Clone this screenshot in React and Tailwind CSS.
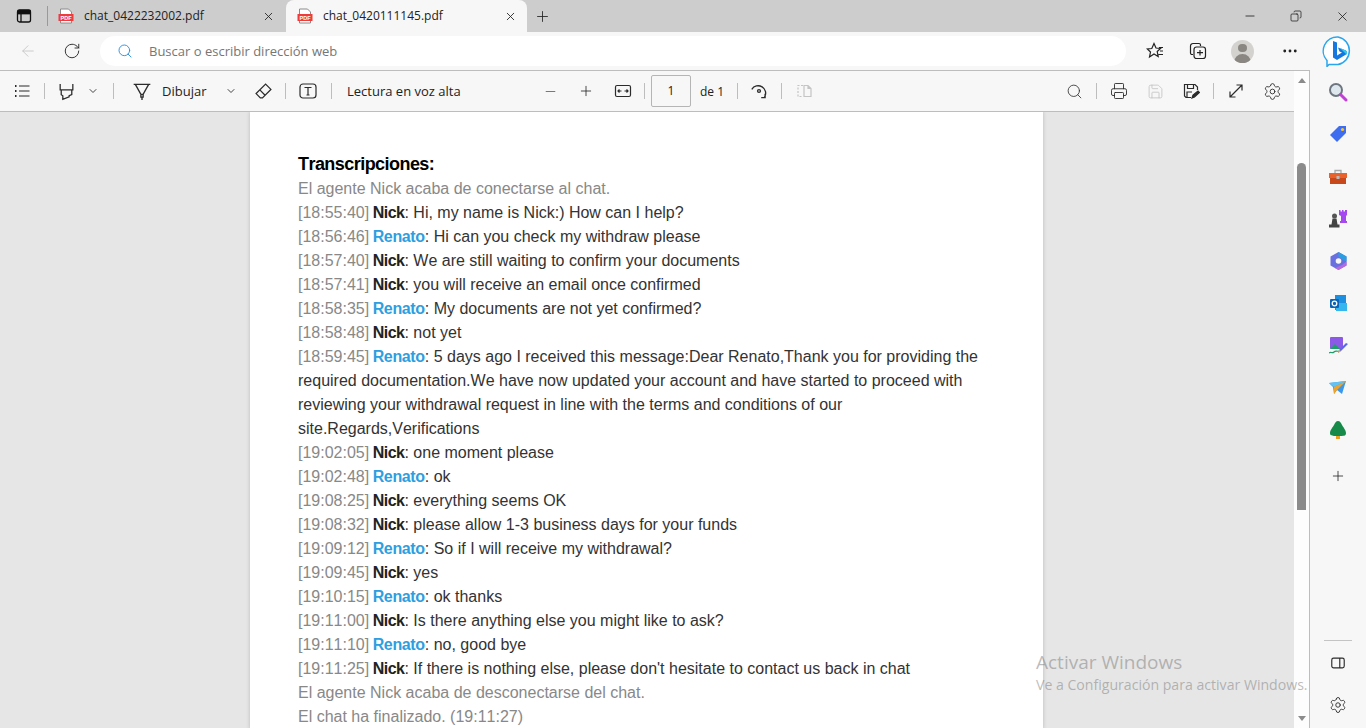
import { Plus, X, Minus, RotateCw, ArrowLeft, Search, Copy, MoreHorizontal, Printer, Save, Settings, ChevronDown } from 'lucide-react'

const LINES = [
  ['18:55:40', 'Nick', 'Hi, my name is Nick:) How can I help?'],
  ['18:56:46', 'Renato', 'Hi can you check my withdraw please'],
  ['18:57:40', 'Nick', 'We are still waiting to confirm your documents'],
  ['18:57:41', 'Nick', 'you will receive an email once confirmed'],
  ['18:58:35', 'Renato', 'My documents are not yet confirmed?'],
  ['18:58:48', 'Nick', 'not yet'],
  ['18:59:45', 'Renato', '5 days ago I received this message:Dear Renato,Thank you for providing the required documentation.We have now updated your account and have started to proceed with reviewing your withdrawal request in line with the terms and conditions of our site.Regards,Verifications'],
  ['19:02:05', 'Nick', 'one moment please'],
  ['19:02:48', 'Renato', 'ok'],
  ['19:08:25', 'Nick', 'everything seems OK'],
  ['19:08:32', 'Nick', 'please allow 1-3 business days for your funds'],
  ['19:09:12', 'Renato', 'So if I will receive my withdrawal?'],
  ['19:09:45', 'Nick', 'yes'],
  ['19:10:15', 'Renato', 'ok thanks'],
  ['19:11:00', 'Nick', 'Is there anything else you might like to ask?'],
  ['19:11:10', 'Renato', 'no, good bye'],
  ['19:11:25', 'Nick', "If there is nothing else, please don't hesitate to contact us back in chat"],
]

function PdfIcon() {
  return (
    <svg width="16" height="16" viewBox="0 0 16 16">
      <path d="M2.5 1h8l3 3v11h-11z" fill="#fff" stroke="#8a8a8a" />
      <rect x="0.5" y="6" width="15" height="7" fill="#ee3b3b" />
      <text x="8" y="11.5" textAnchor="middle" fontSize="5.5" fontWeight="700" fill="#fff" fontFamily="Liberation Sans, sans-serif">PDF</text>
    </svg>
  )
}

function Tab({ name, active }) {
  return (
    <div className={`h-8 flex items-center shrink-0 ${active ? 'w-[241px] bg-[#f7f7f7] rounded-t-lg pl-[11px]' : 'w-[238px] pl-[10px]'}`}>
      <PdfIcon />
      <span className={`text-[12px] text-[#222] ml-[10px] ${active ? 'w-[181px]' : 'w-[178px]'}`}>{name}</span>
      <X className="w-[13px] h-[13px] text-[#222]" strokeWidth={1.6} />
    </div>
  )
}

function Cell({ w = 'w-9', children, className = '' }) {
  return <div className={`${w} h-full flex items-center justify-center shrink-0 ${className}`}>{children}</div>
}

function Sep({ className = '' }) {
  return <div className={`w-px h-[16px] bg-[#bdbdbd] shrink-0 ${className}`} />
}

const Stroke = ({ children, size = 18, color = '#2b2b2b', sw = 1.2 }) => (
  <svg width={size} height={size} viewBox="0 0 18 18" fill="none" stroke={color} strokeWidth={sw}>{children}</svg>
)

function PdfToolbar() {
  return (
    <div className="h-[41px] flex items-center bg-[#f7f7f7] border-b border-[#bdbdbd] text-[#222] text-[13px]">
      <Cell className="ml-[4px]"><Stroke><path d="M2 4h1.500M2 9h1.500M2 14h1.500" strokeWidth="2" /><path d="M6 4h10.500M6 9h10.500M6 14h10.500" /></Stroke></Cell>
      <Sep className="ml-[4px]" />
      <Cell className="ml-[3px]"><Stroke size={19}><path d="M3 2v5.500h12V2M4 7.500V12l1.500 1v3.500l6-2.500v-1l2.500-1V7.500" /></Stroke></Cell>
      <Cell w="w-[18px]"><ChevronDown className="w-[12px] h-[12px] text-[#444]" /></Cell>
      <Sep className="ml-[11px]" />
      <Cell className="ml-[10px]"><Stroke size={20}><path d="M1.500 3h15M3 3l5 9h2l5-9M8 12v2.500h2V12M9 14.500V17" /></Stroke></Cell>
      <span className="ml-[2px] pt-px w-[45px] whitespace-nowrap">Dibujar</span>
      <Cell w="w-[18px]" className="ml-[15px]"><ChevronDown className="w-[12px] h-[12px] text-[#444]" /></Cell>
      <Cell className="ml-[5px]"><Stroke size={19}><path d="M11 2l5 5-8 8H6l-4-4zM5.500 7.500l5 5" /></Stroke></Cell>
      <Sep className="ml-[4px]" />
      <Cell className="ml-[4px]"><Stroke><rect x="1" y="2" width="16" height="14" rx="3" /><path d="M5.500 5.500h7M9 5.500v7.500M7.500 13h3" /></Stroke></Cell>
      <Sep className="ml-[5px]" />
      <span className="ml-[15px] pt-px w-[115px] whitespace-nowrap">Lectura en voz alta</span>
      <Cell className="ml-[70px]"><Minus className="w-[15px] h-[15px] text-[#666]" strokeWidth={1.4} /></Cell>
      <Cell><Plus className="w-[16px] h-[16px] text-[#222]" strokeWidth={1.2} /></Cell>
      <Cell className="ml-px"><Stroke><rect x="1.500" y="3.500" width="15" height="11" rx="1.500" /><path d="M4 9h3.500M10.500 9H14M5.500 7.500L4 9l1.500 1.500M12.500 7.500L14 9l-1.500 1.500" /></Stroke></Cell>
      <Sep className="ml-[3px]" />
      <div className="ml-[6px] w-10 h-[32px] border border-[#b5b5b5] rounded-[2px] flex items-center justify-center text-[12px] shrink-0">1</div>
      <span className="ml-[9px] pt-px w-[24px] text-[12px] whitespace-nowrap">de 1</span>
      <Sep className="ml-[13px]" />
      <Cell className="ml-[3px]"><Stroke size={20}><path d="M2.500 7.500a6.500 6.500 0 1 1 11.500 7M14.500 11.500v3.500h-3.500" /><circle cx="9" cy="9" r="1.300" /></Stroke></Cell>
      <Sep className="ml-[4px]" />
      <Cell className="ml-[4px]"><Stroke color="#c4c4c4"><path d="M8 3.500H3v11h5" strokeDasharray="2 1.500" /><path d="M9 3.500h4l3 3v8H9zM13 3.500v3h3" /></Stroke></Cell>
      <div className="flex-1" />
      <Cell><Search className="w-[17px] h-[17px] text-[#333]" strokeWidth={1.2} /></Cell>
      <Sep className="ml-[4px]" />
      <Cell className="ml-[4px]"><Printer className="w-[18px] h-[18px] text-[#2b2b2b]" strokeWidth={1.2} /></Cell>
      <Cell><Save className="w-[17px] h-[17px] text-[#c4c4c4]" strokeWidth={1.2} /></Cell>
      <Cell><Stroke><path d="M9 15.500H4L2.500 14V2.500H13L15.500 5v3M5.500 2.500v4h6v-4M5 15v-5h5" /><path d="M10 16l1-3 5-4 1.500 1.500-5 4.500z" fill="#2b2b2b" /></Stroke></Cell>
      <Sep className="ml-[4px]" />
      <Cell className="ml-[4px]"><Stroke><path d="M3 15L15 3M9.500 3H15v5.500M3 9.500V15h5.500" /></Stroke></Cell>
      <Cell><Settings className="w-[19px] h-[19px] text-[#2b2b2b]" strokeWidth={1.1} /></Cell>
      <div className="w-[4px]" />
    </div>
  )
}

function PdfPage() {
  return (
    <div className="w-[793px] ml-[250px] bg-white pt-10 px-12 shadow-[0_0_4px_rgba(0,0,0,0.2)] font-['Liberation_Sans',sans-serif] [font-kerning:none] text-[16px] leading-6 text-[#333]">
      <div className="h-[25px] text-[18px] font-bold text-black tracking-[-0.55px]">Transcripciones:</div>
      <div className="text-[#888]">El agente Nick acaba de conectarse al chat.</div>
      {LINES.map(([time, who, msg], i) => (
        <div key={i}>
          <span className="text-[#888]">[{time}]</span>{' '}
          <b className={`-ml-px ${who === 'Renato' ? 'tracking-[-0.35px] text-[#2d9fe0]' : 'tracking-[-0.5px] text-[#222]'}`}>{who}</b>: {msg}
        </div>
      ))}
      <div className="text-[#888]">El agente Nick acaba de desconectarse del chat.</div>
      <div className="text-[#888]">El chat ha finalizado. (19:11:27)</div>
    </div>
  )
}

function Scrollbar() {
  return (
    <div className="w-[15px] bg-[#fdfdfd] flex flex-col items-center shrink-0">
      <div className="mt-[7px] w-0 h-0 border-x-[4px] border-x-transparent border-b-[5px] border-b-[#8b8b8b]" />
      <div className="mt-[80px] w-[9px] h-[347px] bg-[#8b8b8b] rounded-t-full rounded-b-[4px]" />
      <div className="flex-1" />
      <div className="mb-[7px] w-0 h-0 border-x-[4px] border-x-transparent border-t-[5px] border-t-[#8b8b8b]" />
    </div>
  )
}

function SideIcon({ children }) {
  return <div className="h-[42.25px] flex items-center justify-center">{children}</div>
}

function Sidebar() {
  return (
    <div className="w-[57px] bg-[#f7f7f7] flex flex-col items-center shrink-0 relative">
      <div className="h-[38px] w-full pl-px flex items-center justify-center">
        <svg width="32" height="32" viewBox="0 0 32 32">
          <path d="M16 2a14 14 0 0 1 0 27.500H7l-2 2v-6A14 14 0 0 1 16 2z" fill="#fff" stroke="#2aa6ee" strokeWidth="1.500" />
          <path d="M11 6l4 1.500v13l5-3-2.500-1-1.500-4 8 3v4l-9 5.500-4-2.500z" fill="#1478e0" />
          <path d="M18 13l7 3v4l-3-3z" fill="#35c7e8" />
        </svg>
      </div>
      <div className="w-full flex-1 border-l border-[#bdbdbd] flex flex-col items-center pt-[1px]">
        <SideIcon>
          <svg width="20" height="20" viewBox="0 0 20 20">
            <circle cx="8" cy="8" r="6" fill="#dfe7ee" stroke="#6d7680" strokeWidth="2" />
            <path d="M12.500 12.500L18 18" stroke="#c13fd8" strokeWidth="3" strokeLinecap="round" />
          </svg>
        </SideIcon>
        <SideIcon>
          <svg width="18" height="18" viewBox="0 0 18 18">
            <path d="M10 1h7v7l-9 9-7-7z" fill="#3f6df0" />
            <circle cx="13.500" cy="4.500" r="1.600" fill="#f4c531" />
          </svg>
        </SideIcon>
        <SideIcon>
          <svg width="18" height="16" viewBox="0 0 18 16">
            <path d="M6 4V1.500h6V4" fill="none" stroke="#a9a9a9" strokeWidth="1.300" />
            <rect x="0" y="4" width="18" height="5" fill="#e9622b" />
            <rect x="1" y="9" width="16" height="6" fill="#c8481c" />
            <rect x="7.500" y="7" width="3" height="3" fill="#bbb" />
          </svg>
        </SideIcon>
        <SideIcon>
          <svg width="18" height="20" viewBox="0 0 18 20">
            <path d="M10 1h1.500v1.500H13V1h1.500v1.500H16V1h2v5l-1 1v5h1v2h-7v-2h1V7l-2-1z" fill="#a548f0" />
            <circle cx="5.500" cy="7" r="2.500" fill="#555" />
            <path d="M3.500 9.500h4l1 6h2v3H0v-3h2.500z" fill="#444" />
          </svg>
        </SideIcon>
        <SideIcon>
          <svg width="17" height="18" viewBox="0 0 17 18">
            <path d="M8.500 0l8 4.500v9L8.500 18l-8-4.500v-9z" fill="#6a6fe0" />
            <path d="M8.500 0l8 4.500v5l-4-2-4-3z" fill="#2a9fe0" />
            <path d="M16.500 9.500v4L8.500 18 5 16l7-3z" fill="#b56ae0" />
            <circle cx="8.500" cy="9" r="2.800" fill="#f7f7f7" />
          </svg>
        </SideIcon>
        <SideIcon>
          <svg width="17" height="16" viewBox="0 0 17 16">
            <rect x="5" y="0" width="11" height="15" fill="#1c8fe0" />
            <path d="M6 8h11v8H6z" fill="#36b6ee" />
            <rect x="0" y="4" width="9" height="9" rx="1" fill="#0d62b5" />
            <circle cx="4.500" cy="8.500" r="2.300" fill="none" stroke="#fff" strokeWidth="1.300" />
          </svg>
        </SideIcon>
        <SideIcon>
          <svg width="19" height="18" viewBox="0 0 19 18">
            <rect x="1" y="0" width="13" height="12" rx="1" fill="#8b58e8" />
            <path d="M1 12l5-5 5 5z" fill="#1f9d6b" />
            <path d="M0 16c2-2 3 1 5-1s3 0 5-1" fill="none" stroke="#1f9d6b" strokeWidth="1.200" />
            <path d="M9 16l1-3 7-7 2 1-7 7z" fill="#5a67e8" />
            <path d="M9 16l1-3 2 1z" fill="#f2b632" />
          </svg>
        </SideIcon>
        <SideIcon>
          <svg width="18" height="14" viewBox="0 0 18 14">
            <path d="M0 2l17-2-4 13-5-4-3 4-1-7z" fill="#3a98ec" />
            <path d="M0 2l17-2-12 6z" fill="#62c3f2" />
            <path d="M5 6l12-6-9 9-3 4z" fill="#f0a328" />
          </svg>
        </SideIcon>
        <SideIcon>
          <svg width="16" height="18" viewBox="0 0 16 18">
            <rect x="6" y="13" width="4" height="5" fill="#e9a11f" />
            <path d="M8 0c2 0 3 2 4 4s4 5 4 8-2 3-8 3-8 0-8-3 3-6 4-8 2-4 4-4z" fill="#178a4a" />
          </svg>
        </SideIcon>
        <div className="h-[50px] flex items-center justify-center">
          <Plus className="w-[16px] h-[16px] text-[#222]" strokeWidth={1.2} />
        </div>
        <div className="flex-1" />
        <div className="w-[28px] h-px bg-[#c4c4c4]" />
        <div className="h-[44px] flex items-center justify-center">
          <Stroke size={16} sw={1.300}><rect x="2" y="3.500" width="14" height="11" rx="2" /><path d="M11 3.500v11" /></Stroke>
        </div>
        <div className="h-[40px] mb-[3px] flex items-center justify-center">
          <Settings className="w-[18px] h-[18px] text-[#2b2b2b]" strokeWidth={1.2} />
        </div>
      </div>
    </div>
  )
}

export default function App() {
  return (
    <div className="w-[1366px] h-[728px] overflow-hidden flex flex-col relative font-['Open_Sans',sans-serif] bg-[#f7f7f7]">
      {/* Tab strip */}
      <div className="h-8 bg-[#cdcdcd] flex items-center shrink-0">
        <div className="w-[47px] flex justify-center">
          <svg width="16" height="16" viewBox="0 0 16 16" fill="none" stroke="#111" strokeWidth="1.300">
            <rect x="1.500" y="2" width="13" height="12" rx="2" />
            <path d="M2 5.500h12M5 5.500V14" />
            <rect x="2" y="2.500" width="12" height="3" fill="#111" />
          </svg>
        </div>
        <div className="w-px h-[20px] bg-[#999]" />
        <Tab name="chat_0422232002.pdf" />
        <Tab name="chat_0420111145.pdf" active />
        <Plus className="ml-[7px] w-[17px] h-[17px] text-[#222]" strokeWidth={1.2} />
        <div className="flex-1" />
        <Minus className="w-[14px] h-[14px] text-[#111] mr-[33px]" strokeWidth={1.3} />
        <Copy className="w-[12px] h-[12px] text-[#111] mr-[33px] -scale-x-100" strokeWidth={1.4} />
        <X className="w-[15px] h-[15px] text-[#111] mr-[16px]" strokeWidth={1.2} />
      </div>

      <div className="flex-1 flex min-h-0">
        <div className="flex-1 flex flex-col min-w-0">
          {/* Address bar */}
          <div className="h-[39px] bg-[#f7f7f7] border-b border-[#bdbdbd] flex items-center shrink-0">
            <ArrowLeft className="ml-[19px] w-[18px] h-[18px] text-[#c6c6c6]" strokeWidth={1.2} />
            <RotateCw className="ml-[26px] w-[18px] h-[18px] text-[#222]" strokeWidth={1.2} />
            <div className="ml-[19px] w-[1026px] h-[30px] rounded-full bg-white flex items-center pl-[17px]">
              <Search className="w-[16px] h-[16px] text-[#2b8fe0]" strokeWidth={1.4} />
              <span className="ml-[16px] pt-px text-[13px] text-[#767676]">Buscar o escribir dirección web</span>
            </div>
            <div className="flex-1 relative h-full flex items-center">
              <svg className="ml-[20px]" width="18" height="18" viewBox="0 0 18 18" fill="none" stroke="#222" strokeWidth="1.200">
                <path d="M8 1.500l2 4.500 4.500.5-3.300 3 1 5-4.200-2.500L3.500 15l1-5-3.200-3 4.500-.5zM13 5.500h4M14 9h3M12.500 12.500H17" />
              </svg>
              <svg className="ml-[25px]" width="18" height="18" viewBox="0 0 18 18" fill="none" stroke="#222" strokeWidth="1.200">
                <path d="M4 12.500H3a1.500 1.500 0 0 1-1.500-1.500V4A2.500 2.500 0 0 1 4 1.500h6A1.500 1.500 0 0 1 11.500 3v1" />
                <rect x="5" y="5" width="11.500" height="11.500" rx="2.500" />
                <path d="M11 8v5.500M8 10.700h6" />
              </svg>
              <div className="ml-[24px] w-[23px] h-[23px] rounded-full bg-[#d4d2cf] overflow-hidden flex flex-col items-center">
                <div className="mt-[4px] w-[9px] h-[9px] rounded-full bg-[#8a8782]" />
                <div className="mt-[2px] w-[17px] h-[10px] rounded-t-full bg-[#8a8782]" />
              </div>
              <MoreHorizontal className="ml-[27px] w-[18px] h-[18px] text-[#222]" strokeWidth={1.8} />
            </div>
          </div>

          {/* PDF viewer */}
          <div className="flex-1 flex min-h-0">
            <div className="flex-1 flex flex-col min-w-0">
              <PdfToolbar />
              <div className="flex-1 min-h-0 bg-[#e6e6e6] overflow-hidden">
                <PdfPage />
              </div>
            </div>
            <Scrollbar />
          </div>
        </div>
        <Sidebar />
      </div>

      {/* Windows watermark */}
      <div className="absolute left-[1036px] top-[649px] text-[#7a7a7a]/50 whitespace-nowrap pointer-events-none">
        <div className="text-[19px] leading-[26px]">Activar Windows</div>
        <div className="text-[14.100px] leading-[20px]">Ve a Configuración para activar Windows.</div>
      </div>
    </div>
  )
}
